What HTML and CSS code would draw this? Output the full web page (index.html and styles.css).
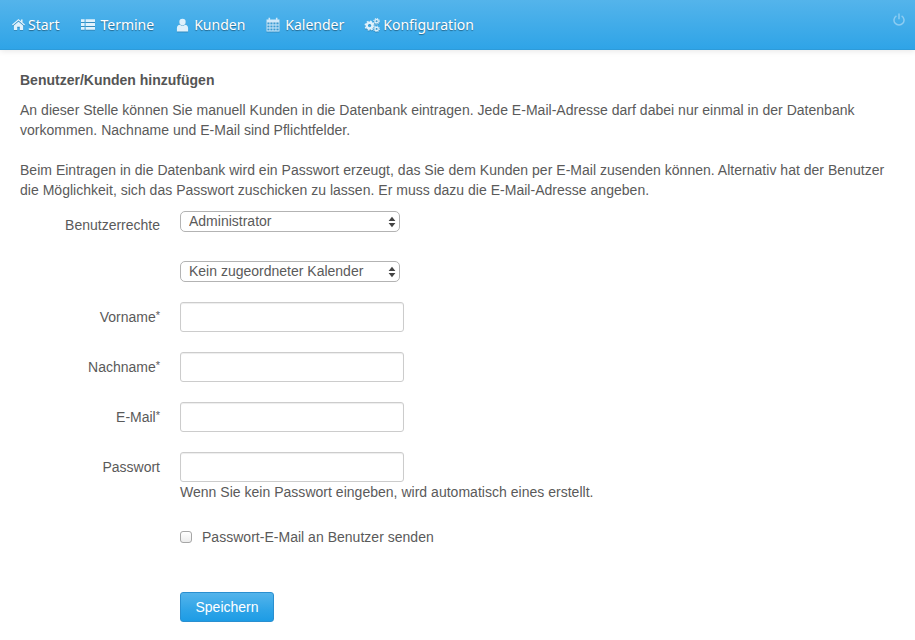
FILE: index.html
```html
<!DOCTYPE html>
<html lang="de">
<head>
<meta charset="utf-8">
<title>Benutzer/Kunden hinzufügen</title>
<link rel="stylesheet" href="styles.css">
</head>
<body>
<header class="navbar">
  <nav class="nav">
    <a class="nav-item" href="#"><svg class="icon" viewBox="0 0 13 13"><path d="M6.5 1 0 6.6l.8.9L6.5 2.6l5.7 4.9.8-.9-2.4-2V1.4H9v1.9z"/><path d="M6.5 3.7 1.9 7.6V12h3.3V8.8h2.6V12h3.3V7.6z"/></svg><span>Start</span></a>
    <a class="nav-item" href="#"><svg class="icon icon-wide" viewBox="0 0 14 12"><path d="M0 .8h3.6v2.8H0zM4.6.8H14v2.8H4.6zM0 4.6h3.6v2.8H0zM4.6 4.6H14v2.8H4.6zM0 8.4h3.6v2.8H0zM4.6 8.4H14v2.8H4.6z"/></svg>Termine</a>
    <a class="nav-item" href="#"><svg class="icon icon-user" viewBox="0 0 12 14"><circle cx="6" cy="4" r="3.2"/><path d="M.4 13.4V10.2c0-2.1 1.3-3.5 3-3.5.7.6 1.6.9 2.6.9s1.9-.3 2.6-.9c1.7 0 3 1.4 3 3.5v3.2z"/></svg>Kunden</a>
    <a class="nav-item" href="#"><svg class="icon icon-cal" viewBox="0 0 14 15"><path fill-rule="evenodd" d="M.5 2.4h2V.8h1.6v1.6h5.8V.8h1.6v1.6h2v12H.5zM1.4 5.6v2h2.1v-2zm3 0v2h2.1v-2zm3 0v2h2.1v-2zm3 0v2h2.2v-2zm-9 2.9v2h2.1v-2zm3 0v2h2.1v-2zm3 0v2h2.1v-2zm3 0v2h2.2v-2zm-9 2.9v2h2.1v-2zm3 0v2h2.1v-2zm3 0v2h2.1v-2zm3 0v2h2.2v-2z"/></svg>Kalender</a>
    <a class="nav-item" href="#"><svg class="icon icon-cogs" viewBox="0 0 16 14"><g fill="none" stroke="currentColor"><circle cx="5.6" cy="7.6" r="2.9" stroke-width="2.4"/><circle cx="5.6" cy="7.6" r="4.4" stroke-width="1.4" stroke-dasharray="1.75 1.7"/><circle cx="12.6" cy="3.2" r="1.7" stroke-width="1.4"/><circle cx="12.6" cy="3.2" r="2.9" stroke-width="1" stroke-dasharray="1.2 1.08"/><circle cx="12.6" cy="11" r="1.7" stroke-width="1.4"/><circle cx="12.6" cy="11" r="2.9" stroke-width="1" stroke-dasharray="1.2 1.08"/></g></svg>Konfiguration</a>
  </nav>
  <a class="power" href="#" aria-label="Abmelden"><svg viewBox="0 0 12 13" class="power-icon"><path d="M3.4 2.8a5 5 0 1 0 5.2 0" fill="none" stroke="currentColor" stroke-width="1.5"/><path d="M6 .6v5.6" fill="none" stroke="currentColor" stroke-width="1.5"/></svg></a>
</header>
<main class="content">
  <h1 class="title">Benutzer/Kunden hinzufügen</h1>
  <p class="para">An dieser Stelle können Sie manuell Kunden in die Datenbank eintragen. Jede E-Mail-Adresse darf dabei nur einmal in der Datenbank vorkommen. Nachname und E-Mail sind Pflichtfelder.</p>
  <p class="para">Beim Eintragen in die Datenbank wird ein Passwort erzeugt, das Sie dem Kunden per E-Mail zusenden können. Alternativ hat der Benutzer die Möglichkeit, sich das Passwort zuschicken zu lassen. Er muss dazu die E-Mail-Adresse angeben.</p>
  <form class="form">
    <div class="row row-select">
      <label class="label">Benutzerrechte</label>
      <div class="select-wrap">
        <select class="select"><option>Administrator</option></select>
        <svg class="select-arrows" viewBox="0 0 8 12"><path d="M4 .8 7.4 5H.6zM4 11.2.6 7h6.8z"/></svg>
      </div>
    </div>
    <div class="row row-select row-select-last">
      <span class="label"></span>
      <div class="select-wrap">
        <select class="select"><option>Kein zugeordneter Kalender</option></select>
        <svg class="select-arrows" viewBox="0 0 8 12"><path d="M4 .8 7.4 5H.6zM4 11.2.6 7h6.8z"/></svg>
      </div>
    </div>
    <div class="row row-input">
      <label class="label">Vorname<sup class="req">*</sup></label>
      <input class="input" type="text">
    </div>
    <div class="row row-input">
      <label class="label">Nachname<sup class="req">*</sup></label>
      <input class="input" type="text">
    </div>
    <div class="row row-input">
      <label class="label">E-Mail<sup class="req">*</sup></label>
      <input class="input" type="text">
    </div>
    <div class="row row-pass">
      <label class="label">Passwort</label>
      <div class="field">
        <input class="input" type="text">
        <div class="hint">Wenn Sie kein Passwort eingeben, wird automatisch eines erstellt.</div>
      </div>
    </div>
    <div class="row row-check">
      <span class="label"></span>
      <label class="check"><span class="checkbox"></span>Passwort-E-Mail an Benutzer senden</label>
    </div>
    <div class="row">
      <span class="label"></span>
      <button class="btn" type="button">Speichern</button>
    </div>
  </form>
</main>
</body>
</html>
```
FILE: styles.css
```css
* { box-sizing: border-box; }
html, body { margin: 0; padding: 0; }
body {
  font-family: "Liberation Sans", Arial, sans-serif;
  font-size: 14px;
  line-height: 20px;
  color: #5a5a5a;
  background: #fff;
  height: 640px;
  overflow: hidden;
}
.navbar {
  height: 50px;
  background: linear-gradient(to bottom, #54b4eb, #2fa4e7);
  border-bottom: 1px solid #2d9bda;
  box-shadow: 0 1px 6px rgba(0,0,0,.1);
  display: flex;
  justify-content: space-between;
  padding-left: 12px;
}
.nav { display: flex; gap: 22px; }
.nav-item {
  display: flex;
  align-items: center;
  height: 49px;
  font-family: "Noto Sans", "Open Sans", sans-serif;
  font-size: 14px;
  color: #fff;
  text-decoration: none;
  text-shadow: 0 1px 1px rgba(0,0,0,.4);
  white-space: nowrap;
}
.icon {
  width: 13px; height: 13px;
  fill: #dff1fc;
  color: #dff1fc;
  margin-right: 3px;
  filter: drop-shadow(0 1px 0 rgba(0,0,0,.18));
}
.icon-wide { width: 14px; margin-right: 5px; }
.icon-user { width: 13px; height: 14px; margin-right: 5px; }
.icon-cal { width: 14px; height: 15px; margin-left: -1px; margin-right: 5px; fill: #cfe9fa; }
.icon-cogs { width: 16px; height: 14px; margin-left: -2px; margin-right: 3px; }
.power { margin: 13px 10px 0 0; height: 14px; color: #8cccf2; }
.power-icon { width: 12px; height: 13px; display: block; }
.content { padding: 20px 20px 0; }
.title { margin: 0 0 10px; font-size: 14px; line-height: 20px; font-weight: bold; color: #555; }
.para { margin: 0 0 20px; letter-spacing: .02px; }
.para:last-of-type { margin-bottom: 0; }
.form { margin-top: 11px; }
.row { display: flex; align-items: flex-start; gap: 20px; }
.label { width: 140px; flex: none; text-align: right; padding-top: 4px; }
.req { font-size: 11px; line-height: 0; vertical-align: 3px; }
.row-input .label, .row-pass .label { padding-top: 5px; }
.row-select { margin-bottom: 29px; height: 21px; }
.row-select-last { margin-bottom: 20px; }
.row-input { margin-bottom: 20px; }
.row-pass { margin-bottom: 20px; }
.row-check { margin-bottom: 45px; }
.select-wrap { position: relative; width: 220px; height: 21px; }
.select {
  appearance: none;
  -webkit-appearance: none;
  display: block;
  width: 100%;
  height: 21px;
  padding: 0 20px 0 8px;
  border: 1px solid #b3b3b3;
  border-radius: 5px;
  background: #fff;
  font-family: "Liberation Sans", Arial, sans-serif;
  font-size: 14px;
  line-height: 19px;
  color: #5a5a5a;
}
.select-arrows { position: absolute; right: 4px; top: 5px; width: 8px; height: 12px; fill: #444; pointer-events: none; }
.input {
  display: block;
  width: 224px;
  height: 30px;
  border: 1px solid #ccc;
  border-radius: 3px;
  background: #fff;
  box-shadow: inset 0 1px 1px rgba(0,0,0,.075);
  padding: 4px 6px;
  font: 14px "Liberation Sans", Arial, sans-serif;
}
.hint { letter-spacing: .02px; }
.check { display: flex; align-items: center; height: 20px; margin-top: 5px; letter-spacing: .02px; }
.checkbox {
  width: 12px; height: 12px;
  margin-right: 10px;
  border: 1px solid #a6a6a6;
  border-radius: 3px;
  background: linear-gradient(#fff, #ececec);
}
.btn {
  width: 94px;
  height: 30px;
  border: 1px solid #2a8fd0;
  border-radius: 3px;
  background: linear-gradient(#54b4eb, #2fa4e7 60%, #1d9ce5);
  color: #fff;
  font: 14px/20px "Liberation Sans", Arial, sans-serif;
  padding: 0;
}
```
